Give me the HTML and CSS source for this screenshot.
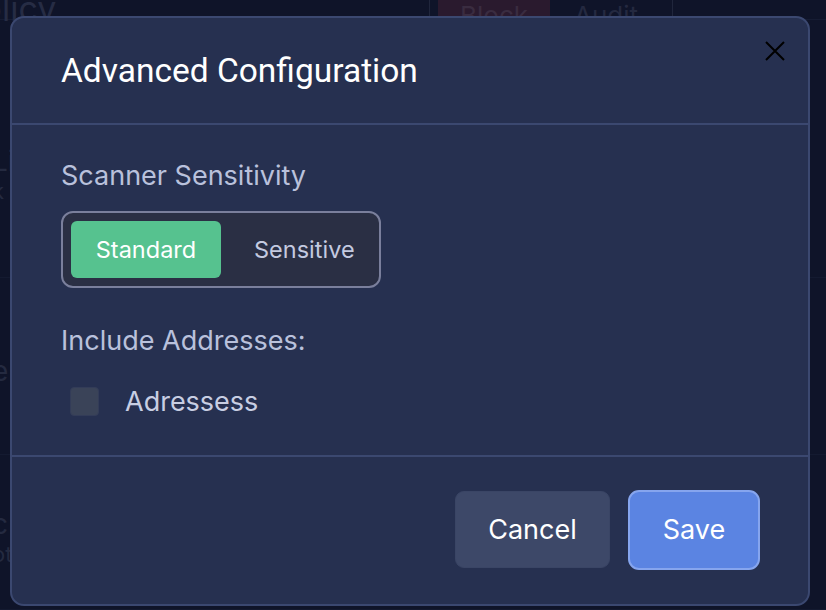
FILE: index.html
```html
<!DOCTYPE html>
<html>
<head>
<meta charset="utf-8">
<link rel="stylesheet" href="styles.css">
</head>
<body>
<div class="page">
  <div class="bg-top">
    <div class="bg-title">Policy</div>
    <div class="bg-seg">
      <span class="bg-block">Block</span>
      <span class="bg-audit">Audit</span>
    </div>
  </div>
  <div class="bg-rows">
    <div class="bg-row"><span class="bg-t1">Li</span><span class="bg-t2">k</span></div>
    <div class="bg-row"><span class="bg-t1">e</span></div>
    <div class="bg-row"><span class="bg-t1">c</span><span class="bg-t2">ot</span></div>
  </div>
</div>
<div class="overlay">
  <div class="modal">
    <div class="modal-header">
      <h2 class="modal-title">Advanced Configuration</h2>
      <button class="close" aria-label="Close">
        <svg width="22" height="22" viewBox="0 0 22 22"><path d="M2 2 L20 20 M20 2 L2 20" stroke="#000" stroke-width="2" fill="none"/></svg>
      </button>
    </div>
    <div class="modal-body">
      <div class="label">Scanner Sensitivity</div>
      <div class="segment">
        <span class="seg-btn active">Standard</span>
        <span class="seg-btn seg-second">Sensitive</span>
      </div>
      <div class="label label-2">Include Addresses:</div>
      <label class="check-row">
        <span class="checkbox"></span>
        <span class="check-text">Adressess</span>
      </label>
    </div>
    <div class="modal-footer">
      <button class="btn btn-cancel">Cancel</button>
      <button class="btn btn-save">Save</button>
    </div>
  </div>
</div>
</body>
</html>
```

FILE: styles.css
```css
* { box-sizing: border-box; }
html, body { margin: 0; padding: 0; }
body {
  width: 826px;
  height: 610px;
  overflow: hidden;
  background: #0f1429;
  font-family: Inter, "Noto Sans", sans-serif;
  position: relative;
}
.page {
  height: 610px;
  color: #262c44;
}
.bg-top {
  display: flex;
  align-items: flex-start;
  height: 20px;
  border-bottom: 1px solid #161c33;
}
.bg-title {
  font-size: 34px;
  margin-top: -12px;
  margin-left: -40px;
  width: 469px;
  color: #262c44;
}
.bg-seg {
  display: flex;
  border-left: 1px solid #20263c;
  border-right: 1px solid #20263c;
  height: 20px;
  padding: 0 10px 0 8px;
}
.bg-block {
  background: #2a1a2e;
  color: #3a2c40;
  width: 112px;
  text-align: center;
  font-size: 26px;
  line-height: 20px;
  padding-top: 6px;
  overflow: hidden;
}
.bg-audit {
  width: 112px;
  text-align: center;
  font-size: 26px;
  line-height: 20px;
  padding-top: 6px;
  color: #242940;
  overflow: hidden;
}
.bg-rows {
  display: flex;
  flex-direction: column;
}
.bg-row {
  display: flex;
  flex-direction: column;
  font-size: 28px;
  color: #242a40;
  border-bottom: 1px solid #141a30;
}
.bg-row:nth-child(1) { height: 258px; padding-top: 124px; }
.bg-row:nth-child(2) { height: 177px; padding-top: 76px; }
.bg-row:nth-child(3) { height: 155px; padding-top: 52px; }
.bg-t1 { margin-left: -8px; }
.bg-t2 { margin-left: -8px; font-size: 22px; }

.overlay {
  position: absolute;
  inset: 0;
}
.modal {
  position: absolute;
  left: 10px;
  top: 16px;
  width: 800px;
  height: 590px;
  background: #263050;
  border: 2px solid #3b4870;
  border-radius: 14px;
  display: flex;
  flex-direction: column;
  overflow: hidden;
}
.modal-header {
  height: 107px;
  border-bottom: 2px solid #3b4870;
  display: flex;
  align-items: center;
  padding: 0 49px;
  position: relative;
}
.modal-title {
  margin: 0;
  font-family: Roboto, "Liberation Sans", sans-serif;
  font-weight: 400;
  font-size: 33.5px;
  color: #ffffff;
}
.close {
  position: absolute;
  right: 22px;
  top: 22px;
  background: none;
  border: 0;
  padding: 0;
  width: 22px;
  height: 22px;
}
.close svg { display: block; }
.modal-body {
  flex: 1;
  padding: 34px 49px 0;
  border-bottom: 2px solid #3b4870;
}
.label {
  font-size: 27px;
  color: #b9c1dc;
  line-height: 34px;
}
.segment {
  margin-top: 18px;
  display: inline-flex;
  align-items: center;
  width: 320px;
  height: 77px;
  padding: 0 8px;
  background: #2a2f44;
  border: 2px solid #7a7f9c;
  border-radius: 12px;
}
.seg-btn {
  flex: 0 0 auto;
  height: 57px;
  display: flex;
  align-items: center;
  justify-content: center;
  font-size: 23.5px;
  color: #c4cae0;
  width: 150px;
  border-radius: 6px;
}
.seg-btn.active {
  background: #56c28f;
  color: #ffffff;
}
.seg-second {
  width: auto;
  justify-content: flex-start;
  padding-left: 33px;
}
.label-2 { margin-top: 36px; }
.check-row {
  display: flex;
  align-items: center;
  margin-top: 27px;
  padding-left: 9px;
}
.checkbox {
  width: 29px;
  height: 29px;
  border-radius: 4px;
  background: #3a4358;
  border: 1px solid #333c58;
}
.check-text {
  margin-left: 26px;
  font-size: 27px;
  color: #c8cee3;
}
.modal-footer {
  height: 147px;
  display: flex;
  align-items: center;
  justify-content: flex-end;
  gap: 18px;
  padding: 0 48px 2px;
}
.btn {
  font-family: Inter, "Noto Sans", sans-serif;
  font-size: 27px;
  color: #ffffff;
  border-radius: 9px;
  cursor: pointer;
}
.btn-cancel {
  width: 155px;
  height: 77px;
  background: #3d4868;
  border: 1px solid #3a4565;
}
.btn-save {
  width: 132px;
  height: 80px;
  background: #5b84e2;
  border: 2px solid #86a5ee;
  border-radius: 11px;
}
```
